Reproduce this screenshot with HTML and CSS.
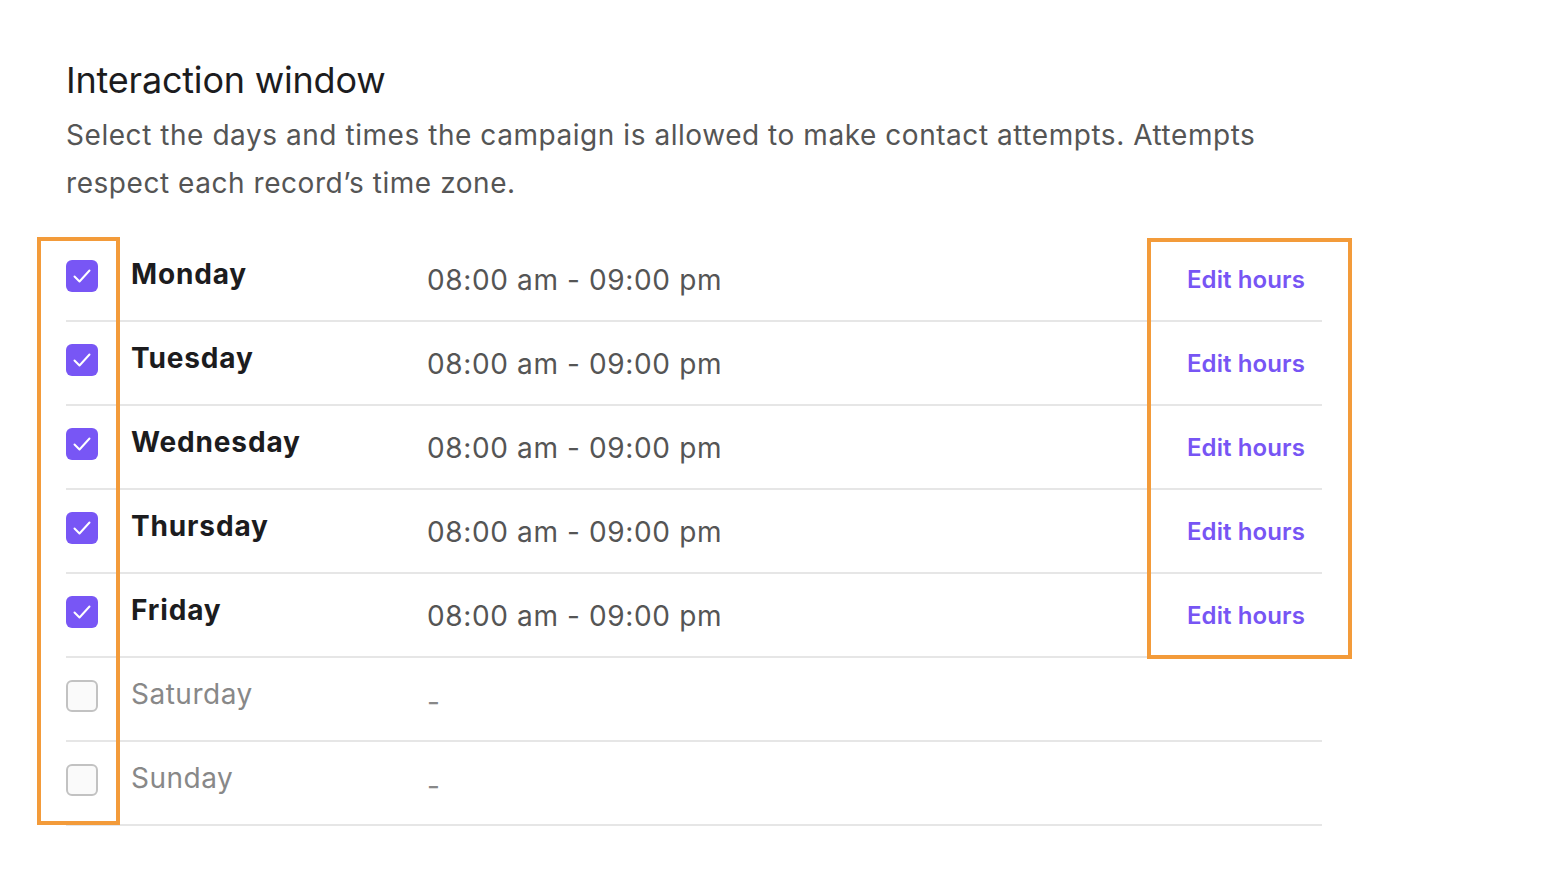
FILE: index.html
```html
<!DOCTYPE html>
<html lang="en">
<head>
    <meta charset="UTF-8">
    <meta name="viewport" content="width=device-width, initial-scale=1.0">
    <title>Interaction window</title>
    <link rel="stylesheet" href="styles.css">
</head>
<body>
    <div class="section">
        <h2 class="section-title">Interaction window</h2>
        <p class="section-desc">Select the days and times the campaign is allowed to make contact attempts. Attempts respect each record’s time zone.</p>

        <div class="schedule">
            <div class="day-row">
                <span class="check checked"></span>
                <span class="day-name">Monday</span>
                <span class="day-time">08:00 am - 09:00 pm</span>
                <a class="edit-link" href="#">Edit hours</a>
            </div>
            <div class="day-row">
                <span class="check checked"></span>
                <span class="day-name">Tuesday</span>
                <span class="day-time">08:00 am - 09:00 pm</span>
                <a class="edit-link" href="#">Edit hours</a>
            </div>
            <div class="day-row">
                <span class="check checked"></span>
                <span class="day-name">Wednesday</span>
                <span class="day-time">08:00 am - 09:00 pm</span>
                <a class="edit-link" href="#">Edit hours</a>
            </div>
            <div class="day-row">
                <span class="check checked"></span>
                <span class="day-name">Thursday</span>
                <span class="day-time">08:00 am - 09:00 pm</span>
                <a class="edit-link" href="#">Edit hours</a>
            </div>
            <div class="day-row">
                <span class="check checked"></span>
                <span class="day-name">Friday</span>
                <span class="day-time">08:00 am - 09:00 pm</span>
                <a class="edit-link" href="#">Edit hours</a>
            </div>
            <div class="day-row off">
                <span class="check"></span>
                <span class="day-name">Saturday</span>
                <span class="day-time">-</span>
                <span></span>
            </div>
            <div class="day-row off">
                <span class="check"></span>
                <span class="day-name">Sunday</span>
                <span class="day-time">-</span>
                <span></span>
            </div>

            <!-- highlight frames -->
            <div class="mark mark-checks"></div>
            <div class="mark mark-edits"></div>
        </div>
    </div>
</body>
</html>
```

FILE: styles.css
```css
body {
    font-family: Inter, "Noto Sans", sans-serif;
    background-color: #ffffff;
    margin: 0;
    padding: 0;
}

.section {
    padding: 56px 0 0 66px;
    width: 1256px;
}

.section-title {
    font-size: 36px;
    font-weight: 400;
    color: #1c1c1e;
    margin: 0 0 8px 0;
    line-height: 48px;
    letter-spacing: -0.2px;
}

.section-desc {
    font-size: 28px;
    color: #555555;
    line-height: 48px;
    margin: -1px 0 31px 0;
    width: 1230px;
    letter-spacing: 0.55px;
}

.schedule {
    position: relative;
}

.day-row {
    display: grid;
    grid-template-columns: 65px 296px 1fr auto;
    align-items: center;
    height: 82px;
    border-bottom: 2px solid #e6e6e6;
    padding-right: 17px;
}

.check {
    width: 32px;
    height: 32px;
    box-sizing: border-box;
    border-radius: 6px;
    border: 2px solid #c2c2c2;
    background-color: #fafafa;
    margin-bottom: 6px;
}

.check.checked {
    border: none;
    background-color: #7856f5;
    background-image: url("data:image/svg+xml,%3Csvg xmlns='http://www.w3.org/2000/svg' viewBox='0 0 32 32'%3E%3Cpath d='M8.5 16.5l5 5 10-11' fill='none' stroke='white' stroke-width='2' stroke-linecap='round' stroke-linejoin='round'/%3E%3C/svg%3E");
}

.day-name {
    font-size: 28px;
    font-weight: 700;
    color: #1c1c1e;
    margin-bottom: 10px;
    letter-spacing: 0.85px;
}

.day-time {
    font-size: 28px;
    color: #555555;
    margin-top: 2px;
    letter-spacing: 0.63px;
}

.edit-link {
    font-size: 24px;
    font-weight: 600;
    color: #7755f4;
    text-decoration: none;
    letter-spacing: 0.1px;
}

.off .day-name {
    font-weight: 400;
    color: #888888;
    letter-spacing: 0.5px;
}

.off .day-time {
    color: #888888;
    margin-top: 6px;
}

.mark {
    position: absolute;
    border: 4px solid #f39b3a;
}

.mark-checks {
    left: -29px;
    top: -1px;
    width: 75px;
    height: 580px;
}

.mark-edits {
    left: 1081px;
    top: 0;
    width: 197px;
    height: 413px;
}
```
